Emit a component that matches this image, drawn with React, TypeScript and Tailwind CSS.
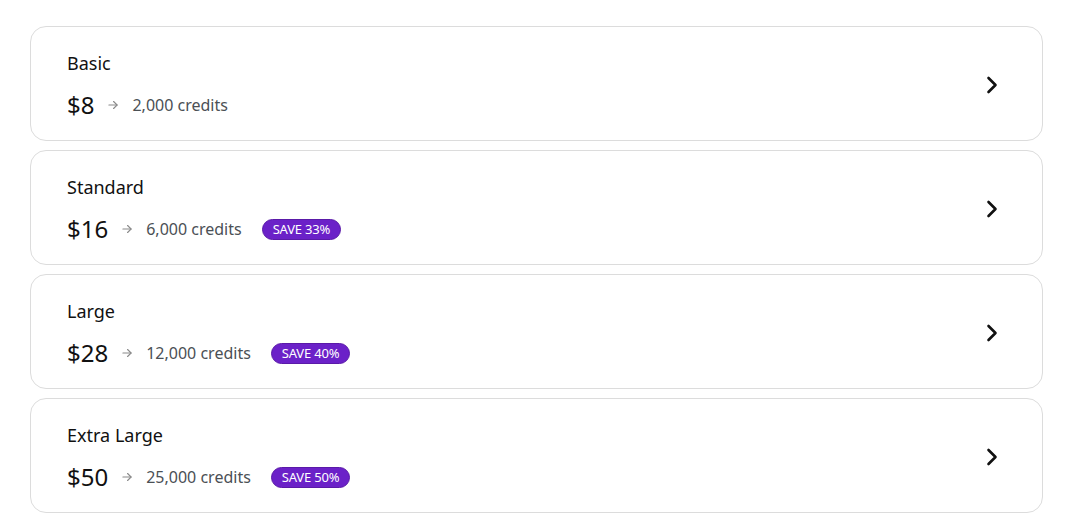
import React from 'react';

interface Plan {
  name: string;
  price: number;
  credits: string;
  save?: string;
}

const plans: Plan[] = [
  { name: 'Basic', price: 8, credits: '2,000' },
  { name: 'Standard', price: 16, credits: '6,000', save: 'SAVE 33%' },
  { name: 'Large', price: 28, credits: '12,000', save: 'SAVE 40%' },
  { name: 'Extra Large', price: 50, credits: '25,000', save: 'SAVE 50%' },
];

function ArrowRight() {
  return (
    <svg width="14" height="14" viewBox="0 0 24 24" fill="none" stroke="currentColor" strokeWidth="2" strokeLinecap="round" strokeLinejoin="round">
      <path d="M5 12h14" />
      <path d="m13 6 6 6-6 6" />
    </svg>
  );
}

function Chevron() {
  return (
    <svg width="24" height="24" viewBox="0 0 24 24" fill="none" stroke="currentColor" strokeWidth="2.6" strokeLinecap="round" strokeLinejoin="round">
      <path d="m8.5 5 7 7-7 7" />
    </svg>
  );
}

function PlanCard({ plan }: { plan: Plan }) {
  return (
    <button className="flex w-full items-center justify-between rounded-2xl border border-[#dcdcdc] bg-white pl-9 pr-[38px] pt-[22px] pb-[19px] text-left">
      <div className="flex flex-col gap-3">
        <span className="text-[18px] leading-7 text-[#111]">{plan.name}</span>
        <div className="flex items-center h-8">
          <span className="text-[24px] leading-8 text-[#111]">${plan.price}</span>
          <span className="ml-3 text-[#8a8a8a]">
            <ArrowRight />
          </span>
          <span className="ml-3 text-[16px] text-[#4b5055]">{plan.credits} credits</span>
          {plan.save && (
            <span className="ml-[20px] rounded-full border border-[#5a1aa8] bg-[#6b21c8] px-[10px] py-[2px] text-[13px] leading-[15px] tracking-[-0.2px] text-white">
              {plan.save}
            </span>
          )}
        </div>
      </div>
      <span className="text-[#111]">
        <Chevron />
      </span>
    </button>
  );
}

export default function App() {
  return (
    <div className="min-h-screen bg-white pt-[26px] pl-[30px] pr-[27px]" style={{ fontFamily: '"Noto Sans", "Open Sans", sans-serif' }}>
      <div className="flex flex-col gap-[9px]">
        {plans.map((p) => (
          <PlanCard key={p.name} plan={p} />
        ))}
      </div>
    </div>
  );
}
